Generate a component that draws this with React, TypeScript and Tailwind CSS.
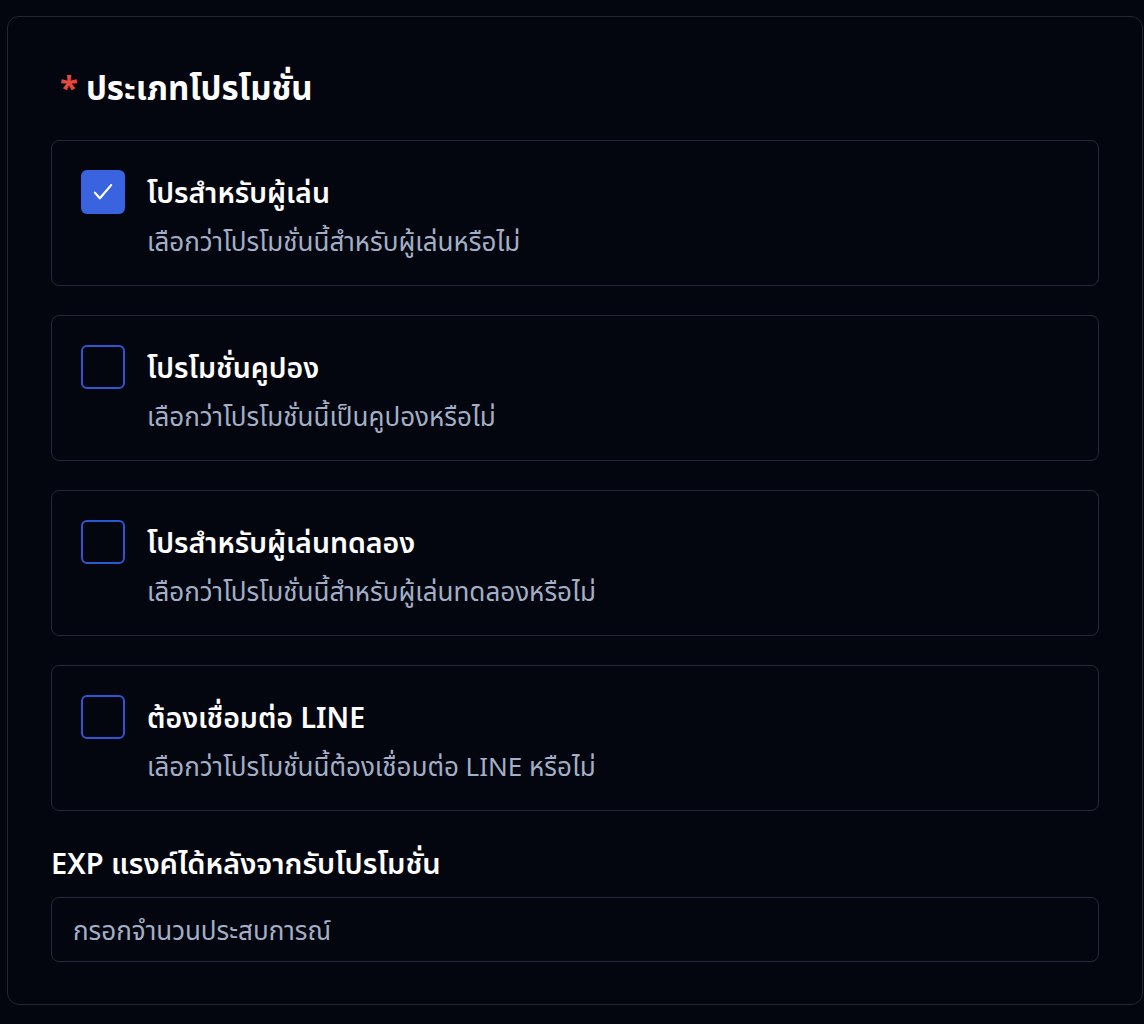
import { useState } from "react";

const options = [
  {
    title: "โปรสำหรับผู้เล่น",
    desc: "เลือกว่าโปรโมชั่นนี้สำหรับผู้เล่นหรือไม่",
    checked: true,
  },
  {
    title: "โปรโมชั่นคูปอง",
    desc: "เลือกว่าโปรโมชั่นนี้เป็นคูปองหรือไม่",
    checked: false,
  },
  {
    title: "โปรสำหรับผู้เล่นทดลอง",
    desc: "เลือกว่าโปรโมชั่นนี้สำหรับผู้เล่นทดลองหรือไม่",
    checked: false,
  },
  {
    title: "ต้องเชื่อมต่อ LINE",
    desc: "เลือกว่าโปรโมชั่นนี้ต้องเชื่อมต่อ LINE หรือไม่",
    checked: false,
  },
];

function OptionCard({
  title,
  desc,
  checked,
  onToggle,
}: {
  title: string;
  desc: string;
  checked: boolean;
  onToggle: () => void;
}) {
  return (
    <label className="flex gap-[22px] rounded-lg border border-[#23283a] p-[29px] cursor-pointer">
      {/* checkbox */}
      <button
        type="button"
        onClick={onToggle}
        className={
          checked
            ? "flex h-[44px] w-[44px] shrink-0 items-center justify-center rounded-md bg-[#3a63e0]"
            : "flex h-[44px] w-[44px] shrink-0 items-center justify-center rounded-md border-2 border-[#2b57d3]"
        }
      >
        {checked && (
          <svg className="h-[30px] w-[30px]" viewBox="0 0 24 24" fill="none" stroke="white" strokeWidth="1.8" strokeLinecap="round" strokeLinejoin="round">
            <path d="M5.5 12.5l4 4.5L18.5 6.5" />
          </svg>
        )}
      </button>
      <div className="flex flex-col">
        <span className="text-[28.5px] font-semibold leading-[44px] text-white">{title}</span>
        <span className="mt-[12px] text-[26px] leading-[30px] text-[#a3afc6]">{desc}</span>
      </div>
    </label>
  );
}

export default function App() {
  const [checks, setChecks] = useState(options.map((o) => o.checked));

  return (
    <div
      className="min-h-[1024px] bg-[#04060f] pt-[16px] pl-[7px]"
      style={{ fontFamily: '"Noto Sans", "Noto Sans Thai", sans-serif' }}
    >
      <div className="w-[1136px] rounded-xl border border-[#22262f] bg-[#04060f] px-[43px] pt-[51px] pb-[42px]">
        {/* heading */}
        <div className="flex items-center gap-[8px] text-[33px] font-bold leading-[40px] text-white">
          <span className="text-[#e5483f] pl-[9px]">*</span>
          <span>ประเภทโปรโมชั่น</span>
        </div>

        {/* options */}
        <div className="mt-[32px] flex flex-col gap-[29px]">
          {options.map((o, i) => (
            <OptionCard
              key={o.title}
              title={o.title}
              desc={o.desc}
              checked={checks[i]}
              onToggle={() =>
                setChecks((c) => c.map((v, j) => (j === i ? !v : v)))
              }
            />
          ))}
        </div>

        {/* exp input */}
        <div className="mt-[34px] text-[29px] font-semibold leading-[36px] text-white">
          EXP แรงค์ได้หลังจากรับโปรโมชั่น
        </div>
        <input
          type="text"
          placeholder="กรอกจำนวนประสบการณ์"
          className="mt-[16px] h-[65px] w-full rounded-lg border border-[#23283a] bg-transparent px-[21px] text-[26px] text-white placeholder:text-[#a3afc6] focus:outline-none"
        />
      </div>
    </div>
  );
}
